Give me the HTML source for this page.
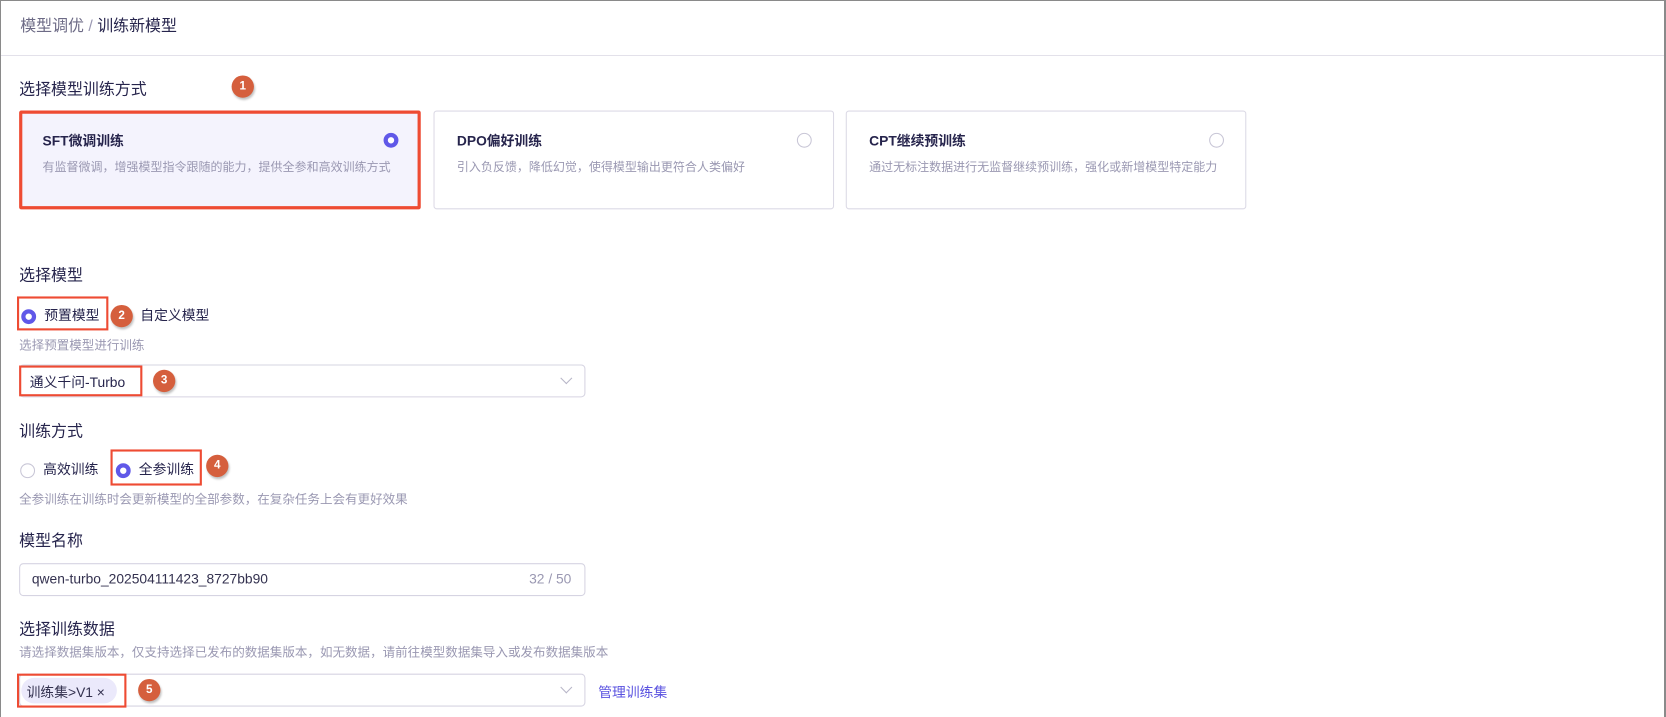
<!DOCTYPE html>
<html><head><meta charset="utf-8"><style>
*{margin:0;padding:0;box-sizing:border-box}
body{width:1666px;height:717px;background:#fff;font-family:"Liberation Sans","Noto Sans CJK SC",sans-serif;position:relative;overflow:hidden;color:#26244c}
.frame{position:absolute;left:0;top:0;width:1666px;height:717px;border:1px solid #8a8a8a;border-right-width:2px;border-bottom:none;z-index:5}
.wrap{position:absolute;left:0;top:0;width:1568px;height:675px;transform:scale(1.0625);transform-origin:0 0}
.a{position:absolute;white-space:nowrap}
.h{font-size:15px;color:#26244c}
.help{font-size:11.8px;color:#9a98b2}
.card{position:absolute;top:104px;height:93px;border:1px solid #dcdae6;border-radius:3px;background:#fff}
.card .t{position:absolute;left:21px;top:17px;font-size:13px;font-weight:bold;color:#26244c}
.card .d{position:absolute;left:21px;top:44px;font-size:11.3px;color:#9a98b2}
.card .r{position:absolute;right:20px;top:18px}
.rad{display:inline-block;width:14px;height:14px;border-radius:50%;border:1px solid #c8c6d6;background:#fff;vertical-align:middle}
.rad.on{border:4px solid #6058e8}
.badge{position:absolute;width:21px;height:21px;border-radius:50%;background:#d55f3d;color:#fff;font-size:11px;font-weight:bold;text-align:center;line-height:21px;box-shadow:1px 2px 2px rgba(0,0,0,.25)}
.red{position:absolute;border:2px solid #ee4b33}
.box{position:absolute;border:1px solid #d6d4e2;border-radius:4px;background:#fff}
.chev{position:absolute;width:8px;height:8px;border-right:1px solid #b8b6c8;border-bottom:1px solid #b8b6c8;transform:rotate(45deg)}
.lbl{font-size:13px;color:#26244c}
</style></head><body>
<div class="frame"></div>
<div class="a" style="left:1px;top:55px;width:1663px;height:1px;background:#e3e1ea"></div>
<div class="wrap">
<div class="a" style="left:19px;top:13px;font-size:15px;color:#6d6b86">模型调优 <span style="color:#9a98b2">/</span> <span style="color:#26244c">训练新模型</span></div>

<div class="a h" style="left:18px;top:73px">选择模型训练方式</div>
<div class="badge" style="left:218px;top:71px">1</div>

<div class="card" style="left:18px;width:378px;background:#f4f3fd;border:3px solid #ee4b33;border-radius:2px">
 <div class="t" style="left:19px;top:15px">SFT微调训练</div>
 <div class="d" style="left:19px;top:42px">有监督微调，增强模型指令跟随的能力，提供全参和高效训练方式</div>
 <div class="r" style="right:18px;top:16px"><span class="rad on"></span></div>
</div>
<div class="card" style="left:408px;width:377px">
 <div class="t">DPO偏好训练</div>
 <div class="d">引入负反馈，降低幻觉，使得模型输出更符合人类偏好</div>
 <div class="r"><span class="rad"></span></div>
</div>
<div class="card" style="left:796px;width:377px">
 <div class="t">CPT继续预训练</div>
 <div class="d">通过无标注数据进行无监督继续预训练，强化或新增模型特定能力</div>
 <div class="r"><span class="rad"></span></div>
</div>

<div class="a h" style="left:18px;top:248px">选择模型</div>
<div class="red" style="left:16px;top:279px;width:86px;height:32px"></div>
<div class="a lbl" style="left:20px;top:286px"><span class="rad on"></span> <span style="margin-left:4px">预置模型</span></div>
<div class="badge" style="left:104px;top:287px">2</div>
<div class="a lbl" style="left:132px;top:286px">自定义模型</div>
<div class="a help" style="left:18px;top:316px">选择预置模型进行训练</div>

<div class="box" style="left:18px;top:343px;width:533px;height:31px"></div>
<div class="chev" style="left:529px;top:352px"></div>
<div class="red" style="left:18px;top:344px;width:116px;height:29px"></div>
<div class="a lbl" style="left:28px;top:349px">通义千问-Turbo</div>
<div class="badge" style="left:144px;top:348px">3</div>

<div class="a h" style="left:18px;top:395px">训练方式</div>
<div class="a lbl" style="left:19px;top:431px"><span class="rad"></span> <span style="margin-left:4px">高效训练</span></div>
<div class="red" style="left:104px;top:423px;width:86px;height:34px"></div>
<div class="a lbl" style="left:109px;top:431px"><span class="rad on"></span> <span style="margin-left:4px">全参训练</span></div>
<div class="badge" style="left:194px;top:428px">4</div>
<div class="a help" style="left:18px;top:461px">全参训练在训练时会更新模型的全部参数，在复杂任务上会有更好效果</div>

<div class="a h" style="left:18px;top:498px">模型名称</div>
<div class="box" style="left:18px;top:530px;width:533px;height:31px"></div>
<div class="a lbl" style="left:30px;top:537px;color:#33314f">qwen-turbo_202504111423_8727bb90</div>
<div class="a lbl" style="left:498px;top:537px;color:#9a98b2">32 / 50</div>

<div class="a h" style="left:18px;top:581px">选择训练数据</div>
<div class="a help" style="left:18px;top:605px">请选择数据集版本，仅支持选择已发布的数据集版本，如无数据，请前往模型数据集导入或发布数据集版本</div>
<div class="box" style="left:18px;top:634px;width:533px;height:31px"></div>
<div class="chev" style="left:529px;top:643px"></div>
<div class="a" style="left:20px;top:638px;width:90px;height:24px;border-radius:12px;background:#ebe9fb"></div>
<div class="red" style="left:16px;top:634px;width:103px;height:32px"></div>
<div class="a lbl" style="left:25px;top:641px;color:#33314f">训练集&gt;V1 ×</div>
<div class="badge" style="left:130px;top:639px">5</div>
<div class="a lbl" style="left:563px;top:641px;color:#5a52e0">管理训练集</div>
</div>
</body></html>
